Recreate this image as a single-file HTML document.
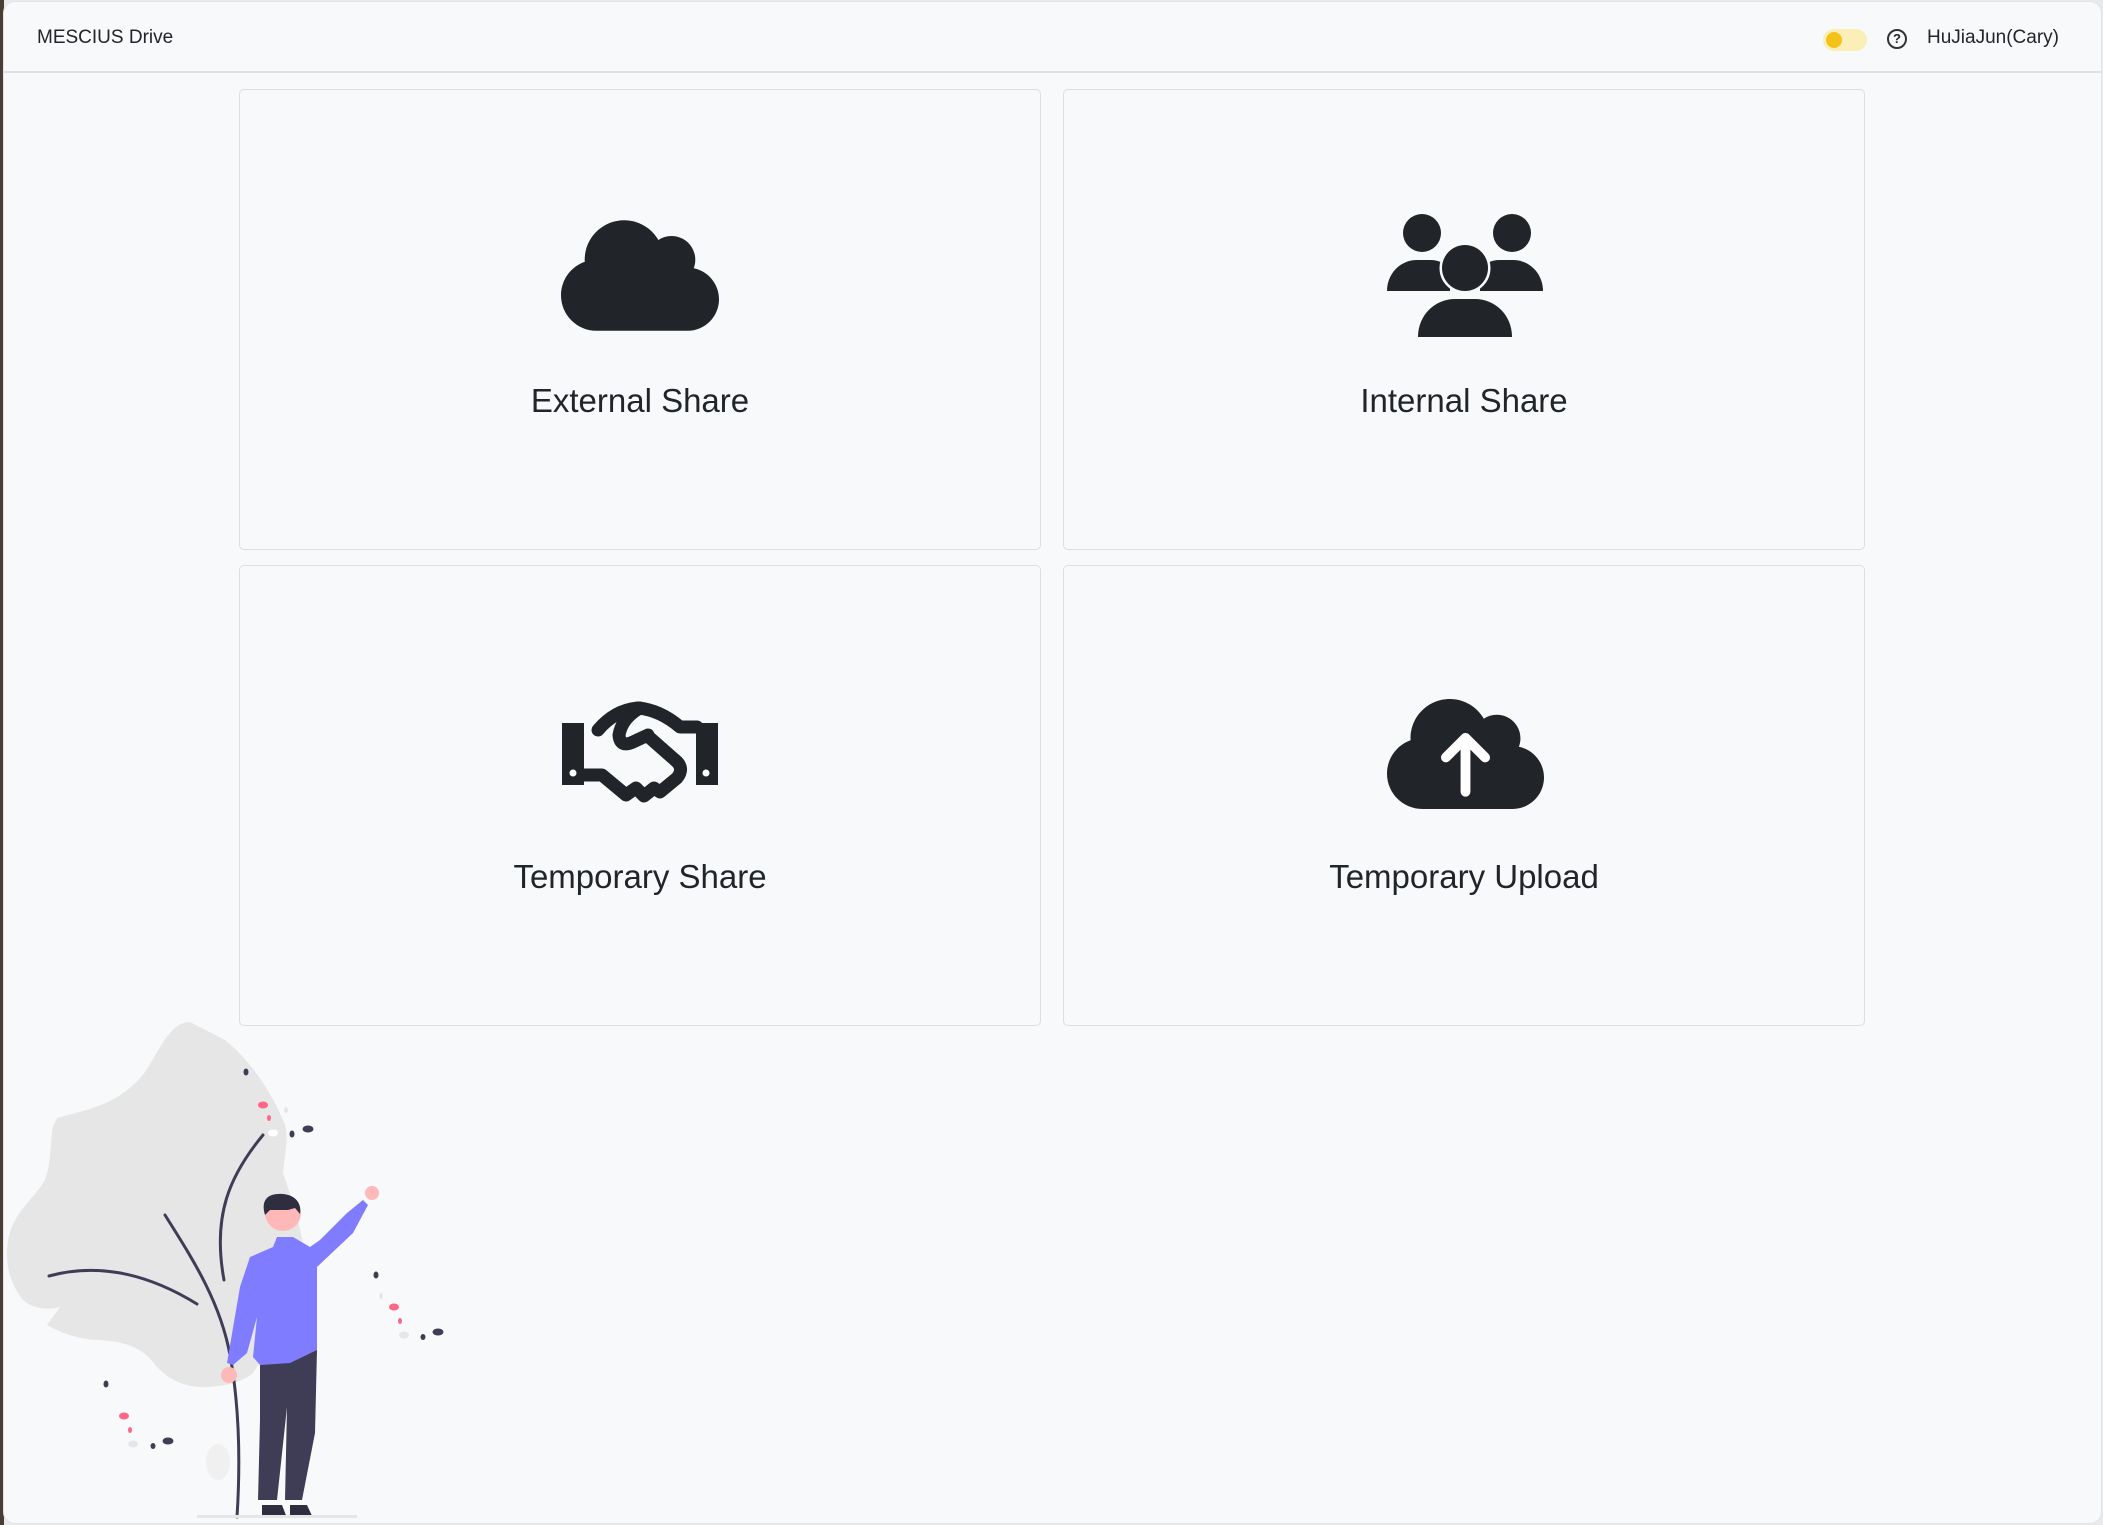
<!DOCTYPE html>
<html><head><meta charset="utf-8"><style>
*{margin:0;padding:0;box-sizing:border-box}
html,body{width:2103px;height:1525px;overflow:hidden;background:#e9eaec;font-family:"Liberation Sans",sans-serif;color:#212529}
.edge{position:absolute;left:0;top:0;width:4px;height:1525px;background:#4a3d33}
.win{position:absolute;left:3px;top:1px;width:2099px;height:1523px;background:#f8f9fa;border-radius:12px;border:1px solid #e3e4e6;overflow:hidden}
.hdr{position:absolute;left:0;top:0;right:0;height:71px;border-bottom:2px solid #dee0e3}
.brand{position:absolute;left:33px;top:25px;font-size:19px}
.user{position:absolute;left:1923px;top:25px;font-size:19px}
.tog{position:absolute;left:1819px;top:27px;width:44px;height:22px;border-radius:11px;background:#fbeeb6}
.tog i{position:absolute;left:3px;top:3px;width:16px;height:16px;border-radius:50%;background:#f4c21b}
.q{position:absolute;left:1883px;top:27px;width:20px;height:20px;border:2px solid #333;border-radius:50%;font-size:13px;font-weight:bold;text-align:center;line-height:16px}
.card{position:absolute;width:802px;height:461px;border:1px solid #dcdfe2;border-radius:5px;background:#f8f9fa}
.card span{position:absolute;left:0;right:0;text-align:center;font-size:33px;top:292px}
svg.ic{position:absolute}
</style></head><body>
<div class="edge"></div>
<div class="win">
<div class="hdr"><div class="brand">MESCIUS Drive</div><div class="tog"><i></i></div><div class="q">?</div><div class="user">HuJiaJun(Cary)</div></div>
</div>
<div class="card" style="left:239px;top:89px"><span>External Share</span></div>
<div class="card" style="left:1063px;top:89px"><span>Internal Share</span></div>
<div class="card" style="left:239px;top:565px"><span>Temporary Share</span></div>
<div class="card" style="left:1063px;top:565px"><span>Temporary Upload</span></div>

<svg class="ic" style="left:561px;top:220px" width="158" height="111" viewBox="0 32 640 448"><path fill="#212529" d="M0 336c0 79.5 64.5 144 144 144H512c70.7 0 128-57.3 128-128c0-61.9-44-113.6-102.4-125.4c4.1-10.7 6.4-22.4 6.4-34.6c0-53-43-96-96-96c-19.7 0-38.1 6-53.3 16.2C367 64.2 315.3 32 256 32C167.6 32 96 103.6 96 192c0 2.7 .1 5.4 .2 8.1C40.2 219.8 0 273.2 0 336z"/></svg>

<svg class="ic" style="left:1387px;top:699px" width="157" height="110" viewBox="0 32 640 448"><path fill="#212529" d="M0 336c0 79.5 64.5 144 144 144H512c70.7 0 128-57.3 128-128c0-61.9-44-113.6-102.4-125.4c4.1-10.7 6.4-22.4 6.4-34.6c0-53-43-96-96-96c-19.7 0-38.1 6-53.3 16.2C367 64.2 315.3 32 256 32C167.6 32 96 103.6 96 192c0 2.7 .1 5.4 .2 8.1C40.2 219.8 0 273.2 0 336z"/><path d="M320 410V200M240 270l80-80 80 80" stroke="#fff" stroke-width="40" stroke-linecap="round" stroke-linejoin="round" fill="none"/></svg>

<svg class="ic" style="left:1370px;top:190px" width="200" height="160" viewBox="0 0 200 160">
<g fill="#212529"><circle cx="52" cy="43" r="19"/><circle cx="142" cy="43" r="19"/>
<path d="M17 101C17 84 30 70 47 70H60C70 70 76 74 80 80L80 101Z"/><path d="M173 101C173 84 160 70 143 70H130C120 70 114 74 110 80L110 101Z"/>
<g stroke="#f8f9fa" stroke-width="5" paint-order="stroke"><circle cx="95" cy="78" r="23"/><path d="M48 147C48 125 65 109 85 109H105C125 109 142 125 142 147Z"/></g></g></svg>

<svg class="ic" style="left:540px;top:680px" width="200" height="150" viewBox="0 0 200 150">
<g fill="#212529"><rect x="22" y="43" width="22" height="62"/><rect x="156" y="43" width="22" height="62"/></g>
<circle cx="33" cy="93" r="3.5" fill="#fff"/><circle cx="166" cy="93" r="3.5" fill="#fff"/>
<g fill="none" stroke="#212529" stroke-width="13" stroke-linejoin="round" stroke-linecap="round">
<path d="M44 95H62L86 115L96 108L104 116L114 108L120 112L137 98Q145 88 135 80L110 58"/>
<path d="M58 50Q75 30 98 28Q120 30 140 47H157"/>
<path d="M100 28Q82 38 79 55Q80 68 93 62L108 55"/>
</g></svg>

<svg class="ic" style="left:0;top:1000px" width="460" height="525" viewBox="0 0 460 525">
<path fill="#e6e6e6" d="M190 22C170 22 160 50 145 72C120 105 85 110 57 118L53 127C50 140 52 160 45 180C30 205 7 215 7 255C7 275 15 290 23 300C35 310 50 310 60 307L47 325C70 338 90 340 100 340C130 342 145 350 157 367C170 380 185 388 207 387C230 386 245 380 253 373C270 345 285 330 300 300C310 270 305 235 283 173C285 150 290 135 283 120C270 90 250 60 225 40Z"/>
<ellipse cx="218" cy="462" rx="12" ry="18" fill="#f0f0f0"/>
<g fill="none" stroke="#3f3d56" stroke-width="3" stroke-linecap="round">
<path d="M165 215C190 255 220 300 230 355C240 410 240 470 237 517"/>
<path d="M263 135C230 175 212 215 224 280"/>
<path d="M49 276C100 262 150 275 197 304"/></g>
<g fill="#3f3d56"><ellipse cx="246" cy="72" rx="2.5" ry="3.5"/><ellipse cx="308" cy="129" rx="5.5" ry="3.5"/><ellipse cx="292" cy="134" rx="2.5" ry="3.5"/><ellipse cx="376" cy="275" rx="2.5" ry="3.5"/><ellipse cx="438" cy="332" rx="5.5" ry="3.5"/><ellipse cx="423" cy="337" rx="2.5" ry="3"/><ellipse cx="106" cy="384" rx="2.5" ry="3.5"/><ellipse cx="168" cy="441" rx="5.5" ry="3.5"/><ellipse cx="153" cy="446" rx="2.5" ry="3"/></g>
<g fill="#ff6584"><ellipse cx="263" cy="105" rx="5" ry="3.5"/><ellipse cx="269" cy="118" rx="2" ry="3"/><ellipse cx="394" cy="307" rx="5" ry="3.5"/><ellipse cx="400" cy="321" rx="2" ry="3"/><ellipse cx="124" cy="416" rx="5" ry="3.5"/><ellipse cx="130" cy="430" rx="2" ry="3"/></g>
<g fill="#e6e6e6"><ellipse cx="404" cy="335" rx="5" ry="3.5"/><ellipse cx="133" cy="444" rx="5" ry="3.5"/><ellipse cx="381" cy="296" rx="2" ry="3"/><ellipse cx="286" cy="110" rx="2" ry="3"/></g>
<ellipse cx="273" cy="133" rx="5" ry="3.5" fill="#fff"/>
<path fill="#3f3d56" d="M260 364L317 350L315 433L302 500L285 500L287 407L277 500L258 500L260 420Z"/>
<path fill="#2f2e41" d="M262 505h20l5 13h-25zM290 505h17l6 13h-23z"/>
<path fill="#807cff" d="M277 237H293L310 247L320 240L347 213L363 200L368 205L353 233L317 267L317 350L290 363L260 365L253 357L257 317L247 353L233 365L227 363L240 287L250 257L273 247Z"/>
<circle cx="283" cy="213" r="18" fill="#ffb8b8"/>
<path fill="#2f2e41" d="M265 215C260 198 270 193 283 194C295 195 302 203 300 214L295 208L288 210L270 210Z"/>
<circle cx="372" cy="193" r="7" fill="#ffb8b8"/>
<circle cx="229" cy="375" r="8" fill="#ffb8b8"/>
<rect x="197" y="515" width="160" height="3" fill="#e6e6e6"/>
</svg>
</body></html>
